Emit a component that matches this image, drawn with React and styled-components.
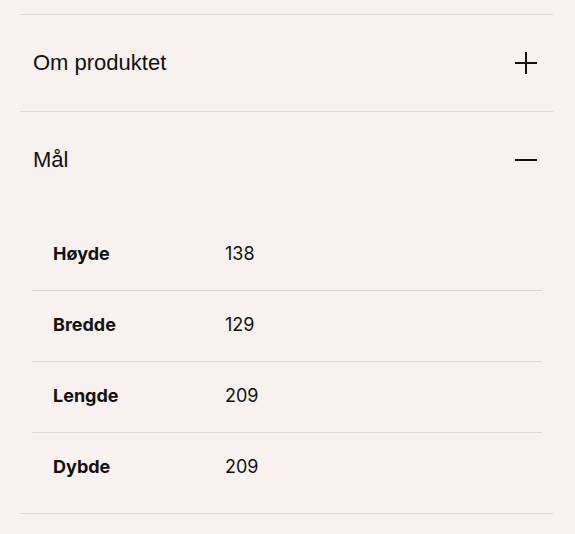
import { useState } from "react";
import styled, { createGlobalStyle } from "styled-components";

const GlobalStyle = createGlobalStyle`
  html, body {
    margin: 0;
    padding: 0;
    background: #f7f2ef;
  }
  body {
    font-family: "Liberation Sans", Arial, sans-serif;
    color: #111;
  }
  * {
    box-sizing: border-box;
  }
`;

const Page = styled.div`
  padding: 14px 22px 20px 20px;
`;

const Accordion = styled.div`
  border-bottom: 1px solid #dcd8d5;
`;

const Item = styled.div`
  border-top: 1px solid #dcd8d5;
`;

const Header = styled.button`
  width: 100%;
  height: 96px;
  display: flex;
  align-items: center;
  justify-content: space-between;
  padding: 0 16px 0 13px;
  background: none;
  border: none;
  cursor: pointer;
  font-family: "Liberation Sans", Arial, sans-serif;
  font-size: 22px;
  color: #111;
  text-align: left;
`;

const Panel = styled.div`
  padding: 11px 11px 10px 12px;
`;

const Table = styled.div`
  display: flex;
  flex-direction: column;
`;

const Row = styled.div`
  height: 71px;
  display: grid;
  grid-template-columns: 172px 1fr;
  align-items: center;
  padding: 0 0 3px 21px;
  font-family: Inter, "Liberation Sans", sans-serif;
  font-size: 18px;
  color: #111;
  & + & {
    border-top: 1px solid #dcd8d5;
  }
`;

const Label = styled.span`
  font-weight: 700;
`;

const Value = styled.span`
  font-weight: 400;
`;

function Icon({ open }) {
  return (
    <svg width="22" height="22" viewBox="0 0 22 22">
      <line x1="0" y1="11" x2="22" y2="11" stroke="#111" strokeWidth="2" />
      {!open && <line x1="11" y1="0" x2="11" y2="22" stroke="#111" strokeWidth="2" />}
    </svg>
  );
}

const sections = [
  { title: "Om produktet", rows: [] },
  {
    title: "Mål",
    rows: [
      ["Høyde", "138"],
      ["Bredde", "129"],
      ["Lengde", "209"],
      ["Dybde", "209"],
    ],
  },
];

export default function App() {
  const [open, setOpen] = useState(1);
  return (
    <>
      <GlobalStyle />
      <Page>
        <Accordion>
          {sections.map((s, i) => (
            <Item key={s.title}>
              <Header onClick={() => setOpen(open === i ? -1 : i)}>
                {s.title}
                <Icon open={open === i} />
              </Header>
              {open === i && (
                <Panel>
                  <Table>
                    {s.rows.map(([k, v]) => (
                      <Row key={k}>
                        <Label>{k}</Label>
                        <Value>{v}</Value>
                      </Row>
                    ))}
                  </Table>
                </Panel>
              )}
            </Item>
          ))}
        </Accordion>
      </Page>
    </>
  );
}
